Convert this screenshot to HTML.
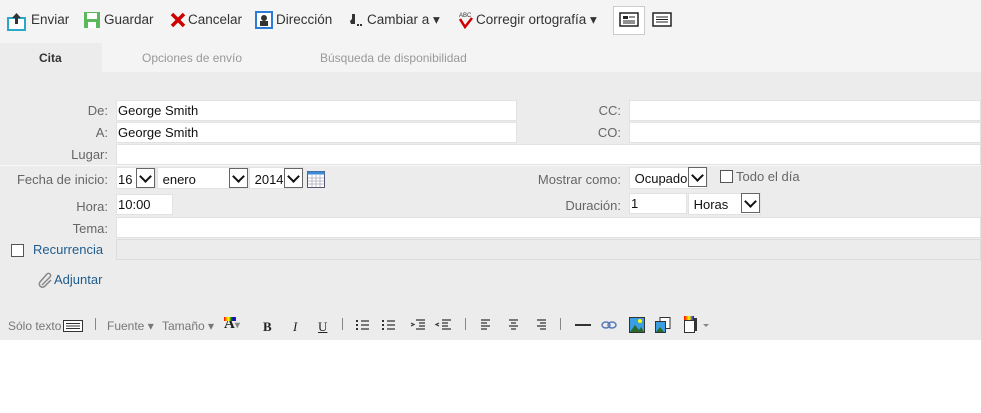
<!DOCTYPE html>
<html><head><meta charset="utf-8"><style>
*{box-sizing:border-box;margin:0;padding:0}
body{width:981px;height:413px;background:#fff;font-family:"Liberation Sans",sans-serif;font-size:13px;color:#333;position:relative;overflow:hidden}
.a{position:absolute}
#top{left:0;top:0;width:981px;height:43px;background:#f4f4f4}
#tabs{left:0;top:43px;width:981px;height:29px;background:#f4f4f4}
#form{left:0;top:72px;width:981px;height:268px;background:#ececec}
.tb{top:12px;font-size:13.5px;color:#333;white-space:nowrap}
.tab{top:51px;font-size:12px;color:#999}
.lbl{font-size:13px;color:#666;text-align:right;white-space:nowrap}
.in{background:#fff;border:1px solid #e2e2e2;font-size:13px;color:#111;padding:2px 1px;white-space:nowrap;line-height:15px}
.arr{background:#fff;border:1px solid #666;width:19px;height:20px}
.arr:after{content:"";position:absolute;left:4px;top:3px;width:7px;height:7px;border-right:2px solid #111;border-bottom:2px solid #111;transform:rotate(45deg)}
.ed{top:319px;font-size:12px;color:#777;white-space:nowrap}
.sep{top:318px;width:1px;height:12px;background:#888}
</style></head><body>
<div class="a" id="top"></div>
<div class="a" id="tabs"></div>
<div class="a" style="left:0;top:43px;width:102px;height:29px;background:#ececec"></div>
<div class="a" style="left:39px;top:51px;font-size:12px;font-weight:bold;color:#333">Cita</div>
<div class="a tab" style="left:142px">Opciones de envío</div>
<div class="a tab" style="left:320px">Búsqueda de disponibilidad</div>

<!-- toolbar -->
<svg class="a" style="left:7px;top:11px" width="20" height="20"><rect x="1" y="7" width="17" height="12" fill="#fff" stroke="#2aa8c8" stroke-width="2"/><path d="M9.5 2 L14 7 H11 V13 H8 V7 H5Z" fill="#333"/></svg>
<div class="a tb" style="left:31px">Enviar</div>
<svg class="a" style="left:83px;top:11px" width="18" height="18"><rect x="1" y="1" width="16" height="16" fill="#5cb85c"/><rect x="4" y="2" width="10" height="6" fill="#fff"/><rect x="5" y="11" width="8" height="6" fill="#fff"/></svg>
<div class="a tb" style="left:104px">Guardar</div>
<svg class="a" style="left:170px;top:12px" width="16" height="16"><path d="M2 2L14 14M14 2L2 14" stroke="#c00" stroke-width="3.5"/></svg>
<div class="a tb" style="left:188px">Cancelar</div>
<svg class="a" style="left:255px;top:11px" width="18" height="18"><rect x="1" y="1" width="16" height="16" fill="#fff" stroke="#2a7ad6" stroke-width="2"/><circle cx="9" cy="7" r="3" fill="#333"/><rect x="5" y="10" width="8" height="5" fill="#333"/></svg>
<div class="a tb" style="left:276px">Dirección</div>
<svg class="a" style="left:347px;top:12px" width="18" height="16"><path d="M5 2 L8 2 L8 12 L4 12 L3 9 L5 7Z" fill="#333"/><rect x="10" y="12" width="2" height="2" fill="#333"/><rect x="13" y="12" width="2" height="2" fill="#333"/></svg>
<div class="a tb" style="left:367px">Cambiar a ▾</div>
<svg class="a" style="left:458px;top:11px" width="16" height="18"><text x="1" y="6" font-size="6" font-family="Liberation Sans" fill="#333">ABC</text><path d="M2 8 L7 16 L14 7" stroke="#c00" stroke-width="2.5" fill="none"/></svg>
<div class="a tb" style="left:476px">Corregir ortografía ▾</div>
<div class="a" style="left:613px;top:6px;width:32px;height:29px;background:#fff;border:1px solid #ccc"></div>
<svg class="a" style="left:619px;top:12px" width="20" height="16"><rect x="1" y="1" width="18" height="13" fill="#fff" stroke="#222" stroke-width="1.5"/><rect x="4" y="4" width="5" height="3" fill="#222"/><path d="M10 5H16M4 9H16M4 11H16" stroke="#222"/></svg>
<svg class="a" style="left:652px;top:12px" width="20" height="16"><rect x="1" y="1" width="18" height="13" fill="#fff" stroke="#222" stroke-width="1.5"/><path d="M4 5H16M4 7.5H16M4 10H16" stroke="#222"/></svg>

<div class="a" id="form"></div>
<!-- left labels -->
<div class="a lbl" style="right:873px;top:103px">De:</div>
<div class="a lbl" style="right:873px;top:125px">A:</div>
<div class="a lbl" style="right:873px;top:147px">Lugar:</div>
<div class="a lbl" style="right:873px;top:172px">Fecha de inicio:</div>
<div class="a lbl" style="right:873px;top:199px">Hora:</div>
<div class="a lbl" style="right:873px;top:221px">Tema:</div>

<div class="a in" style="left:116px;top:100px;width:401px;height:21px">George Smith</div>
<div class="a in" style="left:116px;top:122px;width:401px;height:21px">George Smith</div>
<div class="a lbl" style="right:360px;top:103px">CC:</div>
<div class="a lbl" style="right:360px;top:125px">CO:</div>
<div class="a in" style="left:629px;top:100px;width:352px;height:21px"></div>
<div class="a in" style="left:629px;top:122px;width:352px;height:21px"></div>
<div class="a in" style="left:116px;top:144px;width:865px;height:21px"></div>
<div class="a" style="left:0;top:165px;width:981px;height:1px;background:#f8f8f8"></div>

<div class="a in" style="left:116px;top:167px;width:40px;height:22px;padding-top:4px">16</div>
<div class="a arr" style="left:136px;top:168px"></div>
<div class="a in" style="left:157px;top:167px;width:91px;height:22px;padding-top:4px">&nbsp;enero</div>
<div class="a arr" style="left:229px;top:168px"></div>
<div class="a in" style="left:249px;top:167px;width:54px;height:22px;padding-top:4px">&nbsp;2014</div>
<div class="a arr" style="left:284px;top:168px"></div>
<svg class="a" style="left:307px;top:171px" width="18" height="17"><rect x="0.5" y="0.5" width="17" height="16" fill="#fff" stroke="#557"/><rect x="0.5" y="0.5" width="17" height="3" fill="#3a8ad8"/><path d="M1 7H17M1 10H17M1 13H17M5 4V16M9 4V16M13 4V16" stroke="#aab" stroke-width="0.8"/></svg>

<div class="a lbl" style="right:360px;top:172px">Mostrar como:</div>
<div class="a in" style="left:629px;top:167px;width:79px;height:22px;padding-top:3px">&nbsp;Ocupado</div>
<div class="a arr" style="left:688px;top:167px"></div>
<div class="a" style="left:720px;top:170px;width:13px;height:13px;border:1px solid #555;background:#fff"></div>
<div class="a lbl" style="left:736px;top:169px">Todo el día</div>

<div class="a in" style="left:116px;top:194px;width:57px;height:21px">10:00</div>
<div class="a lbl" style="right:360px;top:198px">Duración:</div>
<div class="a in" style="left:629px;top:193px;width:58px;height:21px">1</div>
<div class="a in" style="left:688px;top:193px;width:73px;height:22px;padding-top:3px">&nbsp;Horas</div>
<div class="a arr" style="left:741px;top:193px"></div>

<div class="a in" style="left:116px;top:217px;width:865px;height:21px"></div>
<div class="a" style="left:116px;top:239px;width:865px;height:21px;border:1px solid #ddd;background:#ececec"></div>
<div class="a" style="left:11px;top:244px;width:13px;height:13px;border:1px solid #555;background:#fff"></div>
<div class="a" style="left:33px;top:242px;color:#1f5c8f">Recurrencia</div>
<svg class="a" style="left:38px;top:272px" width="16" height="16"><path d="M4 13 L12 5 A2 2 0 0 0 9 2 L2 10 A3 3 0 0 0 7 14 L13 8" stroke="#888" stroke-width="1.5" fill="none"/></svg>
<div class="a" style="left:54px;top:272px;color:#1f5c8f">Adjuntar</div>

<!-- editor toolbar -->
<div class="a ed" style="left:8px">Sólo texto</div>
<svg class="a" style="left:63px;top:320px" width="20" height="12"><rect x="0.5" y="0.5" width="19" height="11" fill="#fff" stroke="#333"/><path d="M3 3.5H17M3 6H17M3 8.5H17" stroke="#333"/></svg>
<div class="a sep" style="left:95px"></div>
<div class="a ed" style="left:107px">Fuente ▾</div>
<div class="a ed" style="left:162px">Tamaño ▾</div>
<div class="a" style="left:224px;top:316px;font-family:'Liberation Serif',serif;font-weight:bold;font-size:15px;color:#222">A<span style="font-size:10px;color:#888">▾</span></div>
<div class="a" style="left:224px;top:317px;width:12px;height:4px;background:linear-gradient(90deg,red,orange,yellow,green,blue,purple)"></div>
<div class="a" style="left:263px;top:319px;font-family:'Liberation Serif',serif;font-weight:bold;font-size:13px;color:#222">B</div>
<div class="a" style="left:293px;top:319px;font-family:'Liberation Serif',serif;font-style:italic;font-size:13px;color:#222">I</div>
<div class="a" style="left:318px;top:319px;font-family:'Liberation Serif',serif;text-decoration:underline;font-size:13px;color:#222">U</div>
<div class="a sep" style="left:342px"></div>
<svg class="a" style="left:355px;top:318px" width="120" height="14" stroke="#333" stroke-width="1.2"><path d="M6 3H14M6 7H14M6 11H14M32 3H40M32 7H40M32 11H40M61 2H70M64 5H70M64 8H70M61 11H70M87 2H96M87 5H93M87 8H93M87 11H96"/><path d="M2 2V4M2 6V8M2 10V12M28 2V4M28 6V8M28 10V12" stroke-width="2"/><path d="M56 5L59 6.5L56 8" fill="none"/><path d="M84 5L81 6.5L84 8" fill="none"/></svg>
<div class="a sep" style="left:465px"></div>
<svg class="a" style="left:480px;top:318px" width="70" height="14" stroke="#333" stroke-width="1.2"><path d="M1 2H10M1 5H7M1 8H10M1 11H7M29 2H38M31 5H36M29 8H38M31 11H36M57 2H66M60 5H66M57 8H66M60 11H66"/></svg>
<div class="a sep" style="left:560px"></div>
<div class="a" style="left:575px;top:324px;width:16px;height:2px;background:#333"></div>
<svg class="a" style="left:601px;top:319px" width="16" height="12"><ellipse cx="5" cy="6" rx="4" ry="3" fill="none" stroke="#5a7ab8" stroke-width="1.5"/><ellipse cx="11" cy="6" rx="4" ry="3" fill="none" stroke="#5a7ab8" stroke-width="1.5"/></svg>
<svg class="a" style="left:629px;top:317px" width="16" height="16"><rect x="0.5" y="0.5" width="15" height="15" fill="#3a9ee0" stroke="#333"/><path d="M1 15L6 8L10 13L12 10L15 15Z" fill="#2a6a2a"/><circle cx="11" cy="4" r="2" fill="#ff0"/></svg>
<svg class="a" style="left:655px;top:317px" width="16" height="16"><rect x="5" y="0.5" width="10" height="11" fill="#fff" stroke="#333"/><rect x="0.5" y="4.5" width="10" height="11" fill="#3a9ee0" stroke="#333"/><path d="M1 15L5 10L9 15Z" fill="#2a6a2a"/></svg>
<svg class="a" style="left:684px;top:316px" width="28" height="18"><rect x="0" y="0" width="10" height="4" fill="url(#g)"/><defs><linearGradient id="g"><stop offset="0" stop-color="red"/><stop offset=".5" stop-color="yellow"/><stop offset="1" stop-color="blue"/></linearGradient></defs><rect x="0.5" y="4.5" width="10" height="12" fill="#fff" stroke="#333"/><rect x="10" y="2" width="3" height="13" fill="#333"/><path d="M19 8L22 11L25 8Z" fill="#888"/></svg>
</body></html>
